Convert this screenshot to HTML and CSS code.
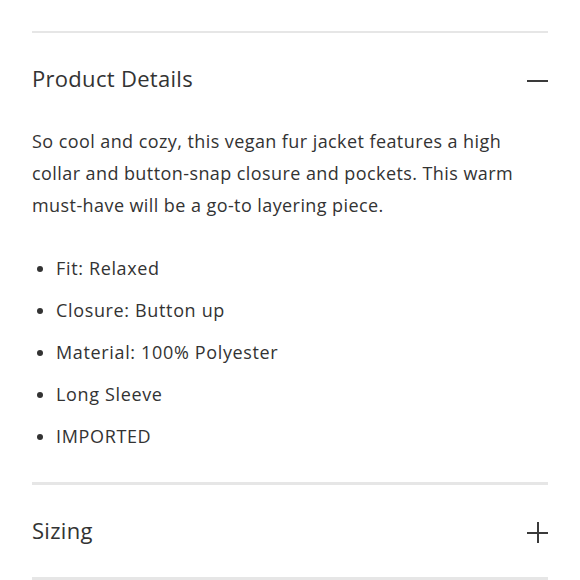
FILE: index.html
```html
<!DOCTYPE html>
<html>
<head>
<meta charset="utf-8">
<link rel="stylesheet" href="styles.css">
</head>
<body>
<div class="accordion">
  <section class="panel panel-first">
    <div class="panel-header">
      <h2 class="panel-title">Product Details</h2>
      <span class="icon icon-minus"></span>
    </div>
    <div class="panel-body">
      <p class="desc">So cool and cozy, this vegan fur jacket features a high collar and button-snap closure and pockets. This warm must-have will be a go-to layering piece.</p>
      <ul class="features">
        <li>Fit: Relaxed</li>
        <li>Closure: Button up</li>
        <li>Material: 100% Polyester</li>
        <li>Long Sleeve</li>
        <li>IMPORTED</li>
      </ul>
    </div>
  </section>
  <section class="panel">
    <div class="panel-header">
      <h2 class="panel-title">Sizing</h2>
      <span class="icon icon-plus"></span>
    </div>
  </section>
  <div class="panel-end"></div>
</div>
</body>
</html>
```
FILE: styles.css
```css
* { box-sizing: border-box; }
html, body { margin: 0; padding: 0; background: #fff; }
body {
  font-family: "Open Sans", "Noto Sans", sans-serif;
  color: #333;
}
.accordion {
  padding: 31px 32px 0;
}
.panel {
  border-top: 3px solid #e6e6e6;
}
.panel-first {
  border-top-width: 2px;
}
.panel-header {
  height: 92px;
  display: flex;
  align-items: center;
  justify-content: space-between;
}
.panel-title {
  margin: 0 0 2px;
  font-size: 22px;
  font-weight: 400;
  letter-spacing: 0.3px;
  color: #333;
}
.icon {
  position: relative;
  width: 21px;
  height: 21px;
  margin-top: 2px;
}
.icon::before, .icon::after {
  content: "";
  position: absolute;
  background: #3a3a3a;
}
.icon::before {
  left: 0; right: 0; top: 10px; height: 2px;
}
.icon-plus::after {
  top: 0; bottom: 0; left: 10px; width: 2px;
}
.panel-body {
  padding-bottom: 30px;
}
.desc {
  margin: 0;
  font-size: 18px;
  line-height: 32px;
  letter-spacing: 0.42px;
}
.features {
  margin: 31px 0 0;
  padding: 0 0 0 24px;
  display: flex;
  flex-direction: column;
  gap: 10px;
  font-size: 18px;
  line-height: 32px;
  letter-spacing: 0.65px;
}
.panel-end {
  border-top: 3px solid #e6e6e6;
  height: 4px;
}
```
